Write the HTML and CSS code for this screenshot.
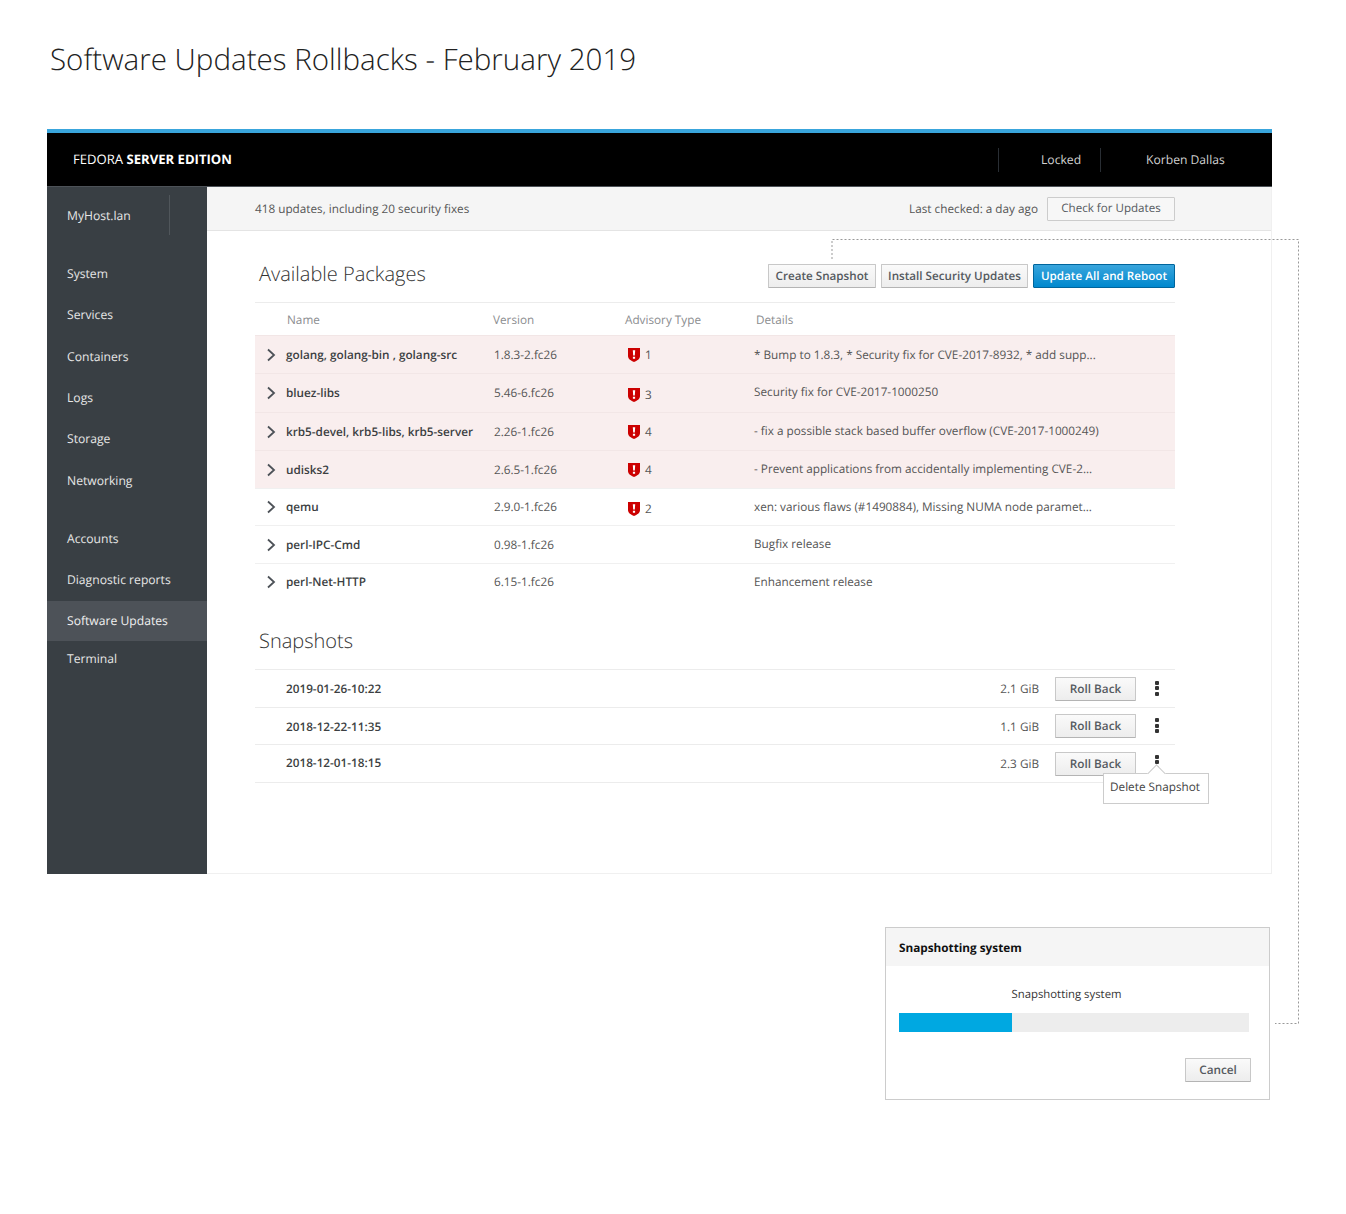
FILE: index.html
```html
<!DOCTYPE html>
<html lang="en">
<head>
  <meta charset="UTF-8">
  <title>Software Updates Rollbacks - February 2019</title>
  <link rel="stylesheet" href="styles.css">
</head>
<body>

  <h1 class="page-title">Software Updates Rollbacks - February 2019</h1>

  <div class="app">
    <header class="topbar">
      <div class="brand">FEDORA <b>SERVER EDITION</b></div>
      <div class="topbar-item topbar-locked">Locked</div>
      <div class="topbar-item topbar-user">Korben Dallas</div>
    </header>

    <div class="app-body">
      <nav class="sidebar">
        <div class="host"><span>MyHost.lan</span></div>
        <ul class="nav-group">
          <li>System</li>
          <li>Services</li>
          <li>Containers</li>
          <li>Logs</li>
          <li>Storage</li>
          <li>Networking</li>
        </ul>
        <ul class="nav-group">
          <li>Accounts</li>
          <li>Diagnostic reports</li>
          <li class="active">Software Updates</li>
          <li class="nav-short">Terminal</li>
        </ul>
      </nav>

      <main class="main">
        <div class="toolbar">
          <span class="toolbar-status">418 updates, including 20 security fixes</span>
          <span class="toolbar-checked">Last checked: a day ago</span>
          <button type="button" class="btn btn-check">Check for Updates</button>
        </div>

        <div class="content">
          <div class="section-head">
            <h2>Available Packages</h2>
            <div class="actions">
              <button type="button" class="btn btn-small btn-create">Create Snapshot</button>
              <button type="button" class="btn btn-small btn-install">Install Security Updates</button>
              <button type="button" class="btn btn-small btn-primary">Update All and Reboot</button>
            </div>
          </div>

          <div class="pkg-head">
            <span>Name</span>
            <span>Version</span>
            <span>Advisory Type</span>
            <span>Details</span>
          </div>

          <div class="pkg-row security">
            <svg class="chevron" viewBox="0 0 10 14"><path d="M2 1.500 8 7l-6 5.500"/></svg>
            <span class="pkg-name">golang, golang-bin , golang-src</span>
            <span>1.8.3-2.fc26</span>
            <span class="advisory"><svg class="shield" viewBox="0 0 12 14"><path class="shield-body" d="M0 0h12v8c0 3-3 4.800-6 6-3-1.200-6-3-6-6z"/><path class="shield-mark" d="M4.800 2.200h2.400l-.4 5.400H5.200zM4.900 8.700h2.200v2.100H4.900z"/></svg>1</span>
            <span>* Bump to 1.8.3, * Security fix for CVE-2017-8932, * add supp...</span>
          </div>
          <div class="pkg-row security tall">
            <svg class="chevron" viewBox="0 0 10 14"><path d="M2 1.500 8 7l-6 5.500"/></svg>
            <span class="pkg-name">bluez-libs</span>
            <span>5.46-6.fc26</span>
            <span class="advisory advisory-low"><svg class="shield" viewBox="0 0 12 14"><path class="shield-body" d="M0 0h12v8c0 3-3 4.800-6 6-3-1.200-6-3-6-6z"/><path class="shield-mark" d="M4.800 2.200h2.400l-.4 5.400H5.200zM4.900 8.700h2.200v2.100H4.900z"/></svg>3</span>
            <span class="details-high">Security fix for CVE-2017-1000250</span>
          </div>
          <div class="pkg-row security">
            <svg class="chevron" viewBox="0 0 10 14"><path d="M2 1.500 8 7l-6 5.500"/></svg>
            <span class="pkg-name">krb5-devel, krb5-libs, krb5-server</span>
            <span>2.26-1.fc26</span>
            <span class="advisory"><svg class="shield" viewBox="0 0 12 14"><path class="shield-body" d="M0 0h12v8c0 3-3 4.800-6 6-3-1.200-6-3-6-6z"/><path class="shield-mark" d="M4.800 2.200h2.400l-.4 5.400H5.200zM4.900 8.700h2.200v2.100H4.900z"/></svg>4</span>
            <span class="details-high">- fix a possible stack based buffer overflow (CVE-2017-1000249)</span>
          </div>
          <div class="pkg-row security">
            <svg class="chevron" viewBox="0 0 10 14"><path d="M2 1.500 8 7l-6 5.500"/></svg>
            <span class="pkg-name">udisks2</span>
            <span>2.6.5-1.fc26</span>
            <span class="advisory"><svg class="shield" viewBox="0 0 12 14"><path class="shield-body" d="M0 0h12v8c0 3-3 4.800-6 6-3-1.200-6-3-6-6z"/><path class="shield-mark" d="M4.800 2.200h2.400l-.4 5.400H5.200zM4.900 8.700h2.200v2.100H4.900z"/></svg>4</span>
            <span class="details-high">- Prevent applications from accidentally implementing CVE-2...</span>
          </div>
          <div class="pkg-row">
            <svg class="chevron" viewBox="0 0 10 14"><path d="M2 1.500 8 7l-6 5.500"/></svg>
            <span class="pkg-name">qemu</span>
            <span>2.9.0-1.fc26</span>
            <span class="advisory advisory-low"><svg class="shield" viewBox="0 0 12 14"><path class="shield-body" d="M0 0h12v8c0 3-3 4.800-6 6-3-1.200-6-3-6-6z"/><path class="shield-mark" d="M4.800 2.200h2.400l-.4 5.400H5.200zM4.900 8.700h2.200v2.100H4.900z"/></svg>2</span>
            <span>xen: various flaws (#1490884), Missing NUMA node paramet...</span>
          </div>
          <div class="pkg-row">
            <svg class="chevron" viewBox="0 0 10 14"><path d="M2 1.500 8 7l-6 5.500"/></svg>
            <span class="pkg-name">perl-IPC-Cmd</span>
            <span>0.98-1.fc26</span>
            <span></span>
            <span class="details-high">Bugfix release</span>
          </div>
          <div class="pkg-row">
            <svg class="chevron" viewBox="0 0 10 14"><path d="M2 1.500 8 7l-6 5.500"/></svg>
            <span class="pkg-name">perl-Net-HTTP</span>
            <span>6.15-1.fc26</span>
            <span></span>
            <span>Enhancement release</span>
          </div>

          <h2 class="snapshots-title">Snapshots</h2>

          <div class="snapshots">
            <div class="snap-row">
              <span class="snap-date">2019-01-26-10:22</span>
              <span class="snap-size">2.1 GiB</span>
              <button type="button" class="btn btn-rollback">Roll Back</button>
              <span class="kebab"><i></i><i></i><i></i></span>
            </div>
            <div class="snap-row">
              <span class="snap-date">2018-12-22-11:35</span>
              <span class="snap-size">1.1 GiB</span>
              <button type="button" class="btn btn-rollback">Roll Back</button>
              <span class="kebab"><i></i><i></i><i></i></span>
            </div>
            <div class="snap-row">
              <span class="snap-date">2018-12-01-18:15</span>
              <span class="snap-size">2.3 GiB</span>
              <button type="button" class="btn btn-rollback">Roll Back</button>
              <span class="kebab kebab-open"><i></i><i></i><i></i>
                <span class="menu-popup">Delete Snapshot</span>
              </span>
            </div>
          </div>
        </div>
      </main>
    </div>
  </div>

  <div class="dialog">
    <div class="dialog-head">Snapshotting system</div>
    <div class="dialog-body">
      <div class="dialog-label">Snapshotting system</div>
      <div class="progress"><div class="progress-bar" style="width: 32.3%"></div></div>
      <div class="dialog-foot">
        <button type="button" class="btn btn-cancel">Cancel</button>
      </div>
    </div>
  </div>

  <!-- dotted connector from Create Snapshot to the dialog -->
  <svg class="connector" width="1346" height="1214">
    <path d="M832 259V239.500H1298.500V1023.500H1275"/>
  </svg>

</body>
</html>
```

FILE: styles.css
```css
* {
  box-sizing: border-box;
}

body {
  font-family: "Open Sans", sans-serif;
  font-size: 11.750px;
  color: #363636;
  background-color: #fff;
  margin: 0;
  padding: 0;
  position: relative;
  height: 1214px;
  overflow: hidden;
  text-rendering: geometricPrecision;
}

.page-title {
  font-size: 29.550px;
  font-weight: 300;
  line-height: 40px;
  color: #222;
  margin: 0;
  padding: 39px 0 0 50px;
  height: 129px;
}

.app {
  width: 1225px;
  margin-left: 47px;
  border-top: 4px solid #39a5dc;
}

.topbar {
  display: flex;
  align-items: center;
  height: 54px;
  background-color: #000;
  color: #d1d1d1;
  border-bottom: 1px solid #4d5258;
}

.brand {
  font-size: 13.100px;
  color: #fff;
  padding: 0 0 2px 26px;
  margin-right: auto;
}

.brand b {
  font-weight: 700;
}

.topbar-item {
  display: flex;
  align-items: center;
  height: 24px;
  border-left: 1px solid #292e34;
  font-size: 12.150px;
}

.topbar-locked {
  width: 102px;
  padding-left: 42px;
}

.topbar-user {
  width: 172px;
  padding-left: 45px;
}

.app-body {
  display: flex;
  height: 687px;
}

.sidebar {
  width: 160px;
  background-color: #393f44;
  color: #e6e6e6;
  font-size: 12.150px;
}

.host {
  display: flex;
  align-items: center;
  width: 123px;
  height: 40px;
  margin-top: 8px;
  padding-left: 20px;
  border-right: 1px solid #50565b;
}

.nav-group {
  list-style: none;
  margin: 0;
  padding: 0;
}

.host + .nav-group {
  margin-top: 18px;
}

.nav-group + .nav-group {
  margin-top: 17px;
}

.nav-group li {
  display: flex;
  align-items: center;
  height: 41.300px;
  padding-left: 20px;
}

.nav-group li.active {
  height: 40px;
  margin-top: 1px;
  padding-bottom: 1px;
  background-color: #4d5258;
  color: #f0f0f0;
}

.nav-group li.nav-short {
  height: 35px;
}

.main {
  flex: 1;
  border-right: 1px solid #f0f0f0;
  border-bottom: 1px solid #f0f0f0;
}

.toolbar {
  display: flex;
  align-items: center;
  height: 44px;
  padding: 0 96px 0 48px;
  background-color: #f5f5f5;
  border-bottom: 1px solid #e4e4e4;
  color: #555;
}

.toolbar-status {
  margin-right: auto;
}

.toolbar-checked {
  margin-right: 9px;
}

.btn {
  font-family: "Open Sans", sans-serif;
  font-size: 11.750px;
  color: #555a60;
  background: linear-gradient(#fafafa, #ededed);
  border: 1px solid #c8c8c8;
  border-bottom-color: #b4b4b4;
  border-radius: 1px;
  padding: 0;
  cursor: pointer;
  text-rendering: geometricPrecision;
}

.btn-check {
  width: 128px;
  height: 24px;
  padding-bottom: 1px;
  font-size: 11.600px;
  background: #f7f7f7;
  border-color: #ccc;
}

.content {
  padding: 0 96px 0 48px;
}

.section-head {
  display: flex;
  align-items: center;
  justify-content: space-between;
  height: 72px;
  padding-top: 14px;
  border-bottom: 1px solid #ececec;
}

h2 {
  font-size: 20px;
  font-weight: 300;
  color: #333;
  margin: 0;
  padding-left: 4px;
}

.actions {
  display: flex;
  gap: 5px;
  margin-top: 5px;
}

.btn-small {
  height: 24px;
  padding: 0;
  font-size: 11.650px;
  font-weight: 600;
}

.btn-create {
  width: 108px;
}

.btn-install {
  width: 147px;
}

.btn-small.btn-primary {
  width: 142px;
  color: #fff;
  background: linear-gradient(#39a5dc, #0088ce);
  border-color: #00659c;
}

.pkg-head,
.pkg-row {
  display: grid;
  align-items: center;
}

.pkg-head {
  grid-template-columns: 206px 132px 131px 1fr;
  height: 32px;
  padding: 1px 0 0 32px;
  color: #8b8d8f;
}

.pkg-row {
  grid-template-columns: 31px 208px 131px 129px 1fr;
  height: 37.400px;
  border-top: 1px solid #f0f0f0;
  color: #555;
}

.pkg-row:last-of-type {
  border-bottom: 1px solid #ececec;
}

.pkg-row.security {
  height: 38px;
  background-color: #f9eeee;
  border-top-color: #f2e6e6;
}

.pkg-row.tall {
  height: 39px;
}

.pkg-name {
  color: #3c3f42;
  font-weight: 600;
}

.details-high {
  margin-bottom: 2px;
}

.chevron {
  width: 10px;
  height: 14px;
  margin-left: 11px;
  fill: none;
  stroke: #4d5258;
  stroke-width: 1.800;
}

.advisory {
  display: flex;
  align-items: center;
  gap: 5px;
  padding-left: 3px;
}

.advisory-low {
  margin-top: 3px;
}

.shield {
  width: 12px;
  height: 14px;
}

.shield-body {
  fill: #cc0000;
}

.shield-mark {
  fill: #fff;
}

.snapshots-title {
  margin: 27px 0 15px;
}

.snapshots {
  border-top: 1px solid #ececec;
}

.snap-row {
  display: flex;
  align-items: center;
  height: 37.500px;
  border-bottom: 1px solid #ececec;
  padding-left: 31px;
}

.snap-date {
  margin-top: 2px;
  font-weight: 600;
  color: #3c3f42;
  margin-right: auto;
}

.snap-row:last-child .snap-date {
  margin-top: 0;
  margin-bottom: 1px;
}

.snap-size {
  margin-top: 2px;
  color: #555;
  margin-right: 16px;
}

.btn-rollback {
  width: 81px;
  height: 24px;
  font-weight: 600;
  margin-top: 1px;
}

.kebab {
  position: relative;
  display: flex;
  flex-direction: column;
  gap: 1.500px;
  width: 39px;
  padding-left: 19px;
}

.kebab-open {
  margin-top: -2px;
}

.kebab i {
  display: block;
  width: 4px;
  height: 4px;
  background-color: #333;
  border-radius: 1px;
}

.menu-popup {
  position: absolute;
  top: 18px;
  left: -33px;
  width: 106px;
  height: 31px;
  display: flex;
  align-items: center;
  justify-content: center;
  padding: 0 2px 2px 0;
  background-color: #fff;
  border: 1px solid #ccc;
  color: #444;
}

.menu-popup::before {
  content: "";
  position: absolute;
  top: -7px;
  left: 46px;
  width: 12px;
  height: 12px;
  background-color: #fff;
  border-left: 1px solid #ccc;
  border-top: 1px solid #ccc;
  transform: rotate(45deg);
}

.dialog {
  width: 385px;
  height: 173px;
  margin: 53px 0 0 885px;
  border: 1px solid #ccc;
}

.dialog-head {
  display: flex;
  align-items: center;
  height: 38px;
  padding: 1px 0 0 13px;
  background-color: #f5f5f5;
  color: #111;
  font-weight: 700;
}

.dialog-body {
  padding: 0 18px 0 13px;
}

.dialog-label {
  font-size: 11.350px;
  text-align: center;
  margin-top: 18px;
  padding: 1px 17px 0 0;
  line-height: 20px;
}

.progress {
  height: 19px;
  width: 350px;
  margin-top: 8px;
  background-color: #ededed;
}

.progress-bar {
  height: 100%;
  background-color: #00a8e1;
}

.dialog-foot {
  display: flex;
  justify-content: flex-end;
  margin-top: 26px;
}

.btn-cancel {
  width: 66px;
  height: 24px;
  font-weight: 600;
}

.connector {
  position: absolute;
  top: 0;
  left: 0;
  pointer-events: none;
}

.connector path {
  fill: none;
  stroke: #999;
  stroke-width: 1;
  stroke-dasharray: 2 2;
}
```
